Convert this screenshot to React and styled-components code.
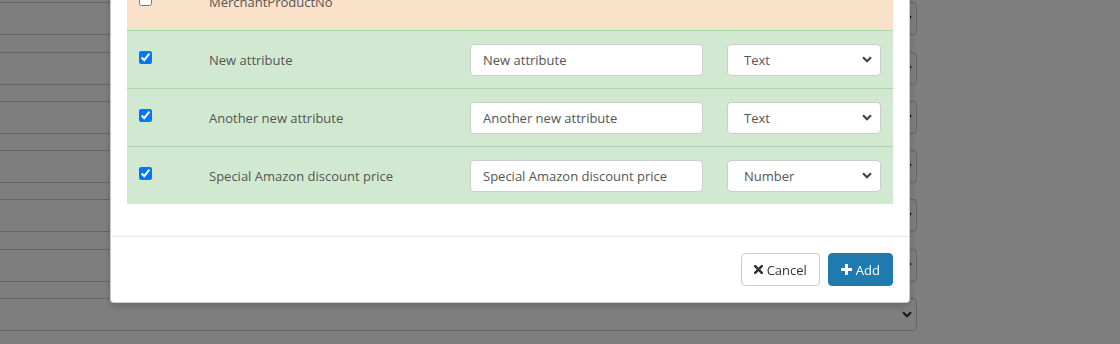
import React from "react";
import styled, { createGlobalStyle } from "styled-components";

const GlobalStyle = createGlobalStyle`
  html, body { margin: 0; padding: 0; overflow: hidden; background: #fff; }
  body { font-family: "Open Sans", "Liberation Sans", sans-serif; font-size: 13px; color: #555; }
  * { box-sizing: border-box; }
`;

const Page = styled.div`
  display: flex;
  flex-direction: column;
  gap: 16.27px;
  padding-top: 2.3px;
  margin-left: -10px;
  width: 927px;
`;

const PageSelect = styled.div`
  height: 33px;
  flex: none;
  border: 1px solid #ccc;
  border-radius: 4px;
  background: #fff;
  display: flex;
  align-items: center;
  justify-content: flex-end;
  padding-right: 4px;
  color: #333;
`;

const Backdrop = styled.div`
  position: fixed;
  inset: 0;
  background: rgba(0, 0, 0, 0.5);
`;

const Modal = styled.div`
  position: fixed;
  top: -45px;
  left: 110px;
  width: 800px;
  background: #fff;
  border: 1px solid rgba(0, 0, 0, 0.2);
  border-radius: 4px;
  box-shadow: 0 3px 9px rgba(0, 0, 0, 0.2);
`;

const Body = styled.div`
  padding: 16px 16px 32px;
`;

const Table = styled.div`
  display: flex;
  flex-direction: column;
`;

const Row = styled.div`
  display: grid;
  grid-template-columns: 70px 261px 257px 178px;
  align-items: center;
  height: 58px;
  border-top: 1px solid ${(p) => (p.$tone === "warning" ? "#f3d2ac" : "#a9d9a9")};
  background: ${(p) => (p.$tone === "warning" ? "#fae2ca" : "#d1e9d1")};
`;

const Cell = styled.div`
  padding: 0 12px;
  display: flex;
  align-items: center;
`;

const CheckCell = styled(Cell)`
  margin-bottom: 5px;
`;

const Check = styled.input`
  width: 13px;
  height: 13px;
  margin: 0;
`;

const Label = styled.span`
  font-size: 13px;
  color: #555;
`;

const TextInput = styled.input`
  width: 100%;
  height: 32px;
  border: 1px solid #ccc;
  border-radius: 4px;
  padding: 0 12px;
  font-family: inherit;
  font-size: 13px;
  color: #555;
  background: #fff;
  outline: none;
`;

const SelectBox = styled.div`
  width: 100%;
  height: 32px;
  border: 1px solid #ccc;
  border-radius: 4px;
  background: #fff;
  display: flex;
  align-items: center;
  justify-content: space-between;
  padding: 0 8px 0 16px;
  font-size: 13px;
  color: #555;
`;

const Footer = styled.div`
  border-top: 1px solid #e5e5e5;
  padding: 16px;
  display: flex;
  justify-content: flex-end;
  gap: 8px;
`;

const Button = styled.button`
  height: 33px;
  display: inline-flex;
  align-items: center;
  gap: 4px;
  padding: 0 12px 0 12px;
  border-radius: 4px;
  font-family: inherit;
  font-size: 13px;
  border: 1px solid ${(p) => (p.$primary ? "#1f7ab0" : "#ccc")};
  background: ${(p) => (p.$primary ? "#1f7ab0" : "#fff")};
  color: ${(p) => (p.$primary ? "#fff" : "#333")};
`;

const Chevron = ({ color = "#333" }) => (
  <svg width="10" height="7" viewBox="0 0 10 7">
    <path d="M1 1.2 L5 5.2 L9 1.2" fill="none" stroke={color} strokeWidth="2.2" />
  </svg>
);

const TimesIcon = () => (
  <svg width="9" height="9" viewBox="0 0 9 9">
    <path d="M1.2 1.2 L7.8 7.8 M7.8 1.2 L1.2 7.8" stroke="#333" strokeWidth="2.6" strokeLinecap="square" />
  </svg>
);

const PlusIcon = () => (
  <svg width="11" height="11" viewBox="0 0 11 11">
    <path d="M5.5 0.5 V10.5 M0.5 5.5 H10.5" stroke="#fff" strokeWidth="3" strokeLinecap="round" />
  </svg>
);

const rows = [
  { name: "New attribute", type: "Text" },
  { name: "Another new attribute", type: "Text" },
  { name: "Special Amazon discount price", type: "Number" },
];

export default function App() {
  return (
    <>
      <GlobalStyle />
      <Page>
        {Array.from({ length: 7 }).map((_, i) => (
          <PageSelect key={i}>
            <Chevron />
          </PageSelect>
        ))}
      </Page>
      <Backdrop />
      <Modal>
        <Body>
          <Table>
            <Row $tone="warning">
              <CheckCell>
                <Check type="checkbox" readOnly />
              </CheckCell>
              <Cell>
                <Label>MerchantProductNo</Label>
              </Cell>
              <Cell />
              <Cell />
            </Row>
            {rows.map((r) => (
              <Row key={r.name} $tone="success">
                <CheckCell>
                  <Check type="checkbox" defaultChecked />
                </CheckCell>
                <Cell>
                  <Label>{r.name}</Label>
                </Cell>
                <Cell>
                  <TextInput defaultValue={r.name} />
                </Cell>
                <Cell>
                  <SelectBox>
                    <span>{r.type}</span>
                    <Chevron color="#444" />
                  </SelectBox>
                </Cell>
              </Row>
            ))}
          </Table>
        </Body>
        <Footer>
          <Button>
            <TimesIcon />
            Cancel
          </Button>
          <Button $primary>
            <PlusIcon />
            Add
          </Button>
        </Footer>
      </Modal>
    </>
  );
}
